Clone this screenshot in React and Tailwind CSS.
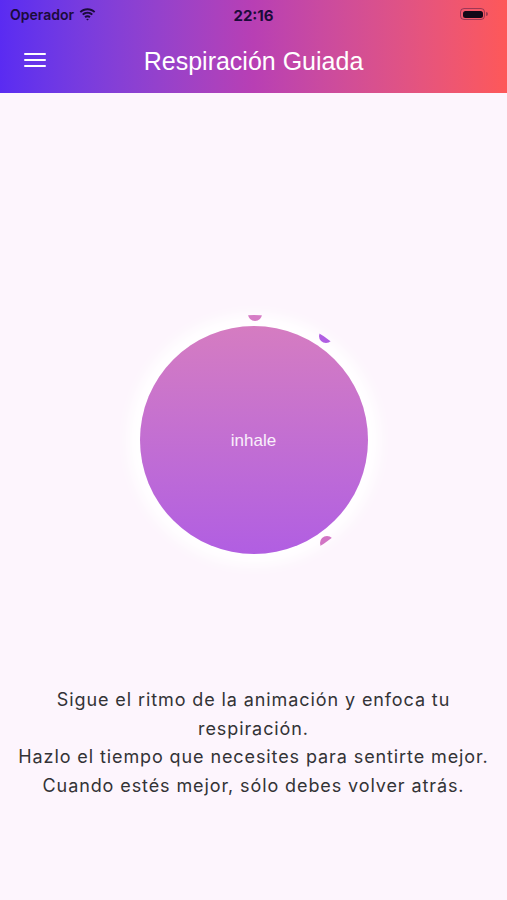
import React from 'react';

function StatusBar() {
  return (
    <div className="relative flex h-[28px] items-center px-[10px] text-[#1b0b3a]">
      <div className="flex items-center gap-[5px] text-[14px] font-semibold">
        <span>Operador</span>
        <svg width="17" height="13" viewBox="0 0 17 13">
          <path d="M8.5 2.2c2.5 0 4.8 1 6.5 2.6l1.3-1.4C14.2 1.4 11.5.2 8.5.2S2.8 1.4.7 3.4L2 4.8c1.7-1.6 4-2.6 6.5-2.6z" fill="currentColor" />
          <path d="M8.5 5.7c1.6 0 3 .6 4.1 1.6l1.3-1.4C12.5 4.6 10.6 3.8 8.5 3.8S4.5 4.6 3.1 5.9l1.3 1.4c1.1-1 2.5-1.6 4.1-1.6z" fill="currentColor" />
          <path d="M8.5 9.2c.7 0 1.3.3 1.8.7l1.3-1.4c-.8-.8-1.9-1.200-3.1-1.2s-2.3.4-3.1 1.2l1.3 1.4c.5-.4 1.1-.7 1.8-.7z" fill="currentColor" />
          <path d="M8.5 12.6l1.3-1.4c-.3-.3-.8-.5-1.3-.5s-1 .2-1.3.5z" fill="currentColor" />
        </svg>
      </div>
      <div className="absolute left-1/2 top-[5px] -translate-x-1/2 text-[15px] font-bold">22:16</div>
      <div className="ml-auto mr-[9px] flex items-center">
        <div className="h-[12px] w-[25px] rounded-[4px] border border-[#1b0b3a]/40 p-[1.5px]">
          <div className="h-full w-full rounded-[2.5px] bg-[#120818]" />
        </div>
        <div className="ml-[1px] h-[4px] w-[2px] rounded-r-sm bg-[#1b0b3a]/40" />
      </div>
    </div>
  );
}

function Header() {
  return (
    <div className="bg-gradient-to-r from-[#5a2bf2] via-[#b83fb4] to-[#fe5858] pb-[1px]">
      <StatusBar />
      <div className="relative flex h-[64px] items-center">
        <button className="ml-[24px] flex flex-col gap-[4px]">
          <span className="block h-[2px] w-[22px] rounded bg-white" />
          <span className="block h-[2px] w-[22px] rounded bg-white" />
          <span className="block h-[2px] w-[22px] rounded bg-white" />
        </button>
        <h1 className="absolute left-1/2 top-[15px] -translate-x-1/2 whitespace-nowrap font-['Liberation_Sans',sans-serif] text-[25px] font-normal text-white">
          Respiración Guiada
        </h1>
      </div>
    </div>
  );
}

function BreathCircle() {
  return (
    <div className="relative h-[260px] w-[260px]">
      <div className="absolute left-[16px] top-[16px] flex h-[228px] w-[228px] items-center justify-center rounded-full bg-gradient-to-b from-[#d57cc1] to-[#b15ee2] shadow-[0_0_14px_12px_rgba(255,255,255,0.95)]">
        <span className="mt-[2px] font-['Liberation_Sans',sans-serif] text-[17px] text-white/90">inhale</span>
      </div>
      {/* dots clipped by the orbit */}
      <svg className="absolute left-0 top-0" width="260" height="260" viewBox="0 0 260 260">
        <defs>
          <clipPath id="orbit">
            <circle cx="130" cy="130" r="125" />
          </clipPath>
        </defs>
        <g clipPath="url(#orbit)">
          <circle cx="131" cy="4" r="7" fill="#d67dc6" />
          <circle cx="202" cy="26" r="7" fill="#b05ee2" />
          <circle cx="203" cy="233" r="7" fill="#d174c4" />
        </g>
      </svg>
    </div>
  );
}

export default function App() {
  return (
    <div className="flex h-[900px] w-full flex-col bg-[#fdf5fd] font-['Inter',sans-serif]">
      <Header />
      <div className="flex flex-1 flex-col items-center">
        <div className="mt-[217px]">
          <BreathCircle />
        </div>
        <p className="mt-[116px] w-[490px] text-center text-[18px] leading-[28.5px] tracking-[0.9px] text-[#333336]">
          Sigue el ritmo de la animación y enfoca tu respiración.
          <br />
          Hazlo el tiempo que necesites para sentirte mejor.
          <br />
          Cuando estés mejor, sólo debes volver atrás.
        </p>
      </div>
    </div>
  );
}
